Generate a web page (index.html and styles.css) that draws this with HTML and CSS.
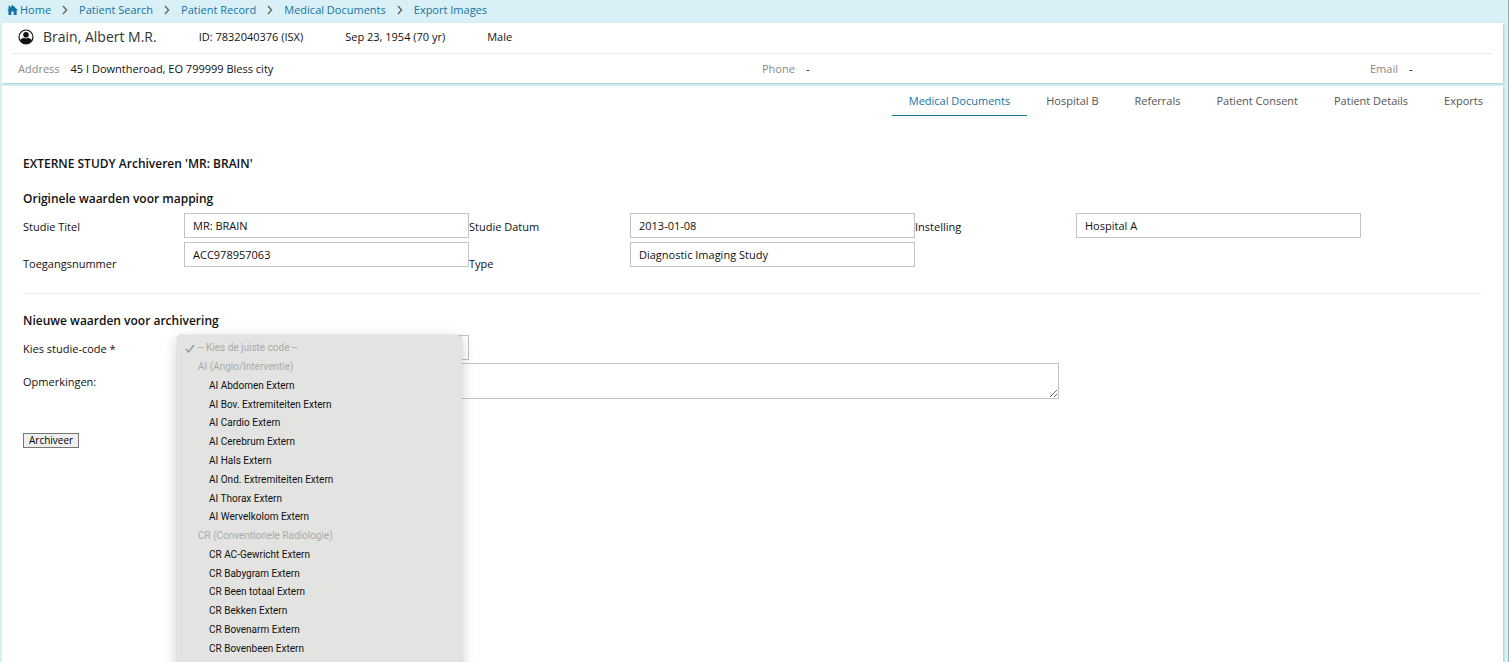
FILE: index.html
```html
<!DOCTYPE html>
<html lang="nl">
<head>
    <meta charset="UTF-8">
    <title>Export Images</title>
    <link rel="stylesheet" href="styles.css">
</head>
<body>
    <!-- breadcrumbs -->
    <nav class="breadcrumbs">
        <a href="#" class="home">
            <svg width="11" height="10" viewBox="0 0 11 10"><path fill="#1474a4" d="M5.5 0L11 5.2H9.6V10H6.7V6.6H4.3V10H1.4V5.2H0L1.6 3.7V.8H3v1.6z"/></svg>Home</a>
        <svg class="arrow" width="6" height="10" viewBox="0 0 6 10"><path d="M1 1l3.6 4L1 9"/></svg>
        <a href="#">Patient Search</a>
        <svg class="arrow" width="6" height="10" viewBox="0 0 6 10"><path d="M1 1l3.6 4L1 9"/></svg>
        <a href="#">Patient Record</a>
        <svg class="arrow" width="6" height="10" viewBox="0 0 6 10"><path d="M1 1l3.6 4L1 9"/></svg>
        <a href="#">Medical Documents</a>
        <svg class="arrow" width="6" height="10" viewBox="0 0 6 10"><path d="M1 1l3.6 4L1 9"/></svg>
        <a href="#">Export Images</a>
    </nav>

    <!-- patient banner -->
    <header class="card patient">
        <div class="patient-top">
            <svg class="avatar" width="16" height="16" viewBox="0 0 16 16">
                <circle cx="8" cy="8" r="7" fill="#fff" stroke="#111" stroke-width="1.2"/>
                <circle cx="8" cy="5.8" r="2.8" fill="#111"/>
                <path fill="#111" d="M2.4 11C3.4 9.6 5 9 6 8.8c1.2.8 2.8.8 4 0 1 .2 2.6.8 3.6 2.2C12.6 13.6 10.500 15 8 15s-4.600-1.400-5.600-4z"/>
            </svg>
            <span class="name">Brain, Albert M.R.</span>
            <span>ID: 7832040376 (ISX)</span>
            <span>Sep 23, 1954 (70 yr)</span>
            <span>Male</span>
        </div>
        <div class="patient-contact">
            <div><span class="caption">Address</span>45 I Downtheroad, EO 799999 Bless city</div>
            <div><span class="caption">Phone</span>-</div>
            <div><span class="caption">Email</span>-</div>
        </div>
    </header>

    <main class="card content">
        <nav class="tabs">
            <a href="#" class="active">Medical Documents</a>
            <a href="#">Hospital B</a>
            <a href="#">Referrals</a>
            <a href="#">Patient Consent</a>
            <a href="#">Patient Details</a>
            <a href="#">Exports</a>
        </nav>

        <form class="archive-form">
            <h1>EXTERNE STUDY Archiveren 'MR: BRAIN'</h1>

            <h2>Originele waarden voor mapping</h2>
            <div class="fields">
                <label for="title">Studie Titel</label>
                <input type="text" id="title" value="MR: BRAIN" readonly>
                <label for="date">Studie Datum</label>
                <input type="text" id="date" value="2013-01-08" readonly>
                <label for="hospital">Instelling</label>
                <input type="text" id="hospital" value="Hospital A" readonly>
            </div>
            <div class="fields second">
                <label for="accession">Toegangsnummer</label>
                <input type="text" id="accession" value="ACC978957063" readonly>
                <label for="type">Type</label>
                <input type="text" id="type" value="Diagnostic Imaging Study" readonly>
            </div>

            <hr>

            <h2>Nieuwe waarden voor archivering</h2>
            <div class="fields">
                <label for="code">Kies studie-code *</label>
                <div class="code-field">
                    <select id="code">
                        <option></option>
                    </select>
                    <!-- opened code list -->
                    <div class="menu">
                        <ul>
                            <li class="group checked"><svg width="10" height="9" viewBox="0 0 10 9"><path d="M1 5l2.6 3L9 1"/></svg>-- Kies de juiste code --</li>
                            <li class="group">AI (Angio/Interventie)</li>
                            <li>AI Abdomen Extern</li>
                            <li>AI Bov. Extremiteiten Extern</li>
                            <li>AI Cardio Extern</li>
                            <li>AI Cerebrum Extern</li>
                            <li>AI Hals Extern</li>
                            <li>AI Ond. Extremiteiten Extern</li>
                            <li>AI Thorax Extern</li>
                            <li>AI Wervelkolom Extern</li>
                            <li class="group">CR (Conventionele Radiologie)</li>
                            <li>CR AC-Gewricht Extern</li>
                            <li>CR Babygram Extern</li>
                            <li>CR Been totaal Extern</li>
                            <li>CR Bekken Extern</li>
                            <li>CR Bovenarm Extern</li>
                            <li>CR Bovenbeen Extern</li>
                        </ul>
                    </div>
                </div>
            </div>
            <div class="fields remarks">
                <label for="remarks">Opmerkingen:</label>
                <textarea id="remarks"></textarea>
            </div>

            <button type="button">Archiveer</button>
        </form>
    </main>
</body>
</html>
```
FILE: styles.css
```css
* {
    box-sizing: border-box;
}
body {
    margin: 0;
    padding: 0 5px 0 2px;
    height: 100vh;
    overflow: hidden;
    display: flex;
    flex-direction: column;
    background: #d9f0f6;
    border-right: 1px solid #8fb0ba;
    font: 11px/16px "Open Sans", sans-serif;
    color: #111;
}
a {
    color: #1474a4;
    text-decoration: none;
}
.breadcrumbs {
    display: flex;
    align-items: center;
    gap: 11px;
    height: 20px;
    margin-bottom: 3px;
    padding-left: 5px;
}
.breadcrumbs .home {
    display: flex;
    align-items: center;
    gap: 2px;
}
.arrow {
    fill: none;
    stroke: #666;
    stroke-width: 1.4;
}
.card {
    background: #fff;
    box-shadow: 1px 1px 2px #a9ccd5;
}

/* patient banner */
.patient {
    height: 60px;
    margin-bottom: 3px;
    padding: 0 12px 0 11px;
}
.patient-top {
    display: flex;
    align-items: center;
    gap: 42px;
    height: 31px;
    padding: 0 5px 2px;
    border-bottom: 1px solid #e8e8e8;
}
.patient-top .avatar {
    margin-right: -33px;
}
.patient-top .name {
    font-size: 14px;
    color: #333;
}
.patient-contact {
    display: grid;
    grid-template-columns: 744fr 608fr 121fr;
    padding: 7px 0 0 5px;
}
.caption {
    margin-right: 11px;
    color: #888;
}

.content {
    flex: 1;
    min-height: 0;
}
.tabs {
    display: flex;
    justify-content: flex-end;
    gap: 2px;
    padding-right: 3px;
}
.tabs a {
    padding: 7px 17px 6px;
    border-bottom: 1px solid transparent;
    color: #555;
}
.tabs .active {
    color: #1474a4;
    border-color: #1474a4;
}

/* archive form */
.archive-form {
    padding: 0 22px 0 21px;
}
h1,
h2 {
    margin: 0;
    font-size: 12px;
    line-height: 16px;
    font-weight: 600;
}
h1 {
    margin: 40px 0 19px;
}
.fields {
    display: grid;
    grid-template-columns: 161fr 285fr 161fr 285fr 161fr 285fr 120fr;
    margin-top: 6px;
}
.fields label {
    padding-top: 6px;
}
.fields.second {
    margin-top: 4px;
}
.fields.second label {
    padding-top: 14px;
}
input,
select,
textarea {
    display: block;
    width: 100%;
    min-width: 0;
    height: 25px;
    margin: 0;
    padding: 0 8px;
    border: 1px solid #c4c4c4;
    border-radius: 0;
    background: #fff;
    font: inherit;
    color: #111;
}
select {
    appearance: none;
}
hr {
    margin: 21px 0 19px;
    border: 0;
    border-top: 1px solid #e8e8e8;
}
.code-field {
    position: relative;
}
.fields.remarks {
    grid-template-columns: 161fr 875fr 422fr;
    margin-top: 3px;
}
.remarks label {
    padding-top: 11px;
}
textarea {
    height: 36px;
}
button {
    display: block;
    margin-top: 34px;
    padding: 0 5px;
    border: 1px solid #777;
    background: #efefef;
    font: 10px/13px "Open Sans", sans-serif;
    color: #000;
}

.menu {
    position: absolute;
    top: 0;
    left: -7px;
    width: 100%;
    padding: 4px 0 20px;
    border-radius: 5px;
    background: #e3e3e1;
    box-shadow: 0 0 1px #999, 0 4px 14px rgba(0, 0, 0, 0.2);
    font-family: Roboto, sans-serif;
    font-size: 10px;
}
.menu ul {
    display: flex;
    flex-direction: column;
    height: 319px;
    margin: 0;
    padding: 0;
    list-style: none;
}
.menu li {
    display: flex;
    align-items: center;
    flex: 1;
    padding-left: 32px;
}
.menu .group {
    padding-left: 21px;
    color: #aaa;
}
.menu .checked {
    gap: 3px;
    padding-left: 8px;
}
.menu svg {
    fill: none;
    stroke: #999;
    stroke-width: 1.5;
}
```
